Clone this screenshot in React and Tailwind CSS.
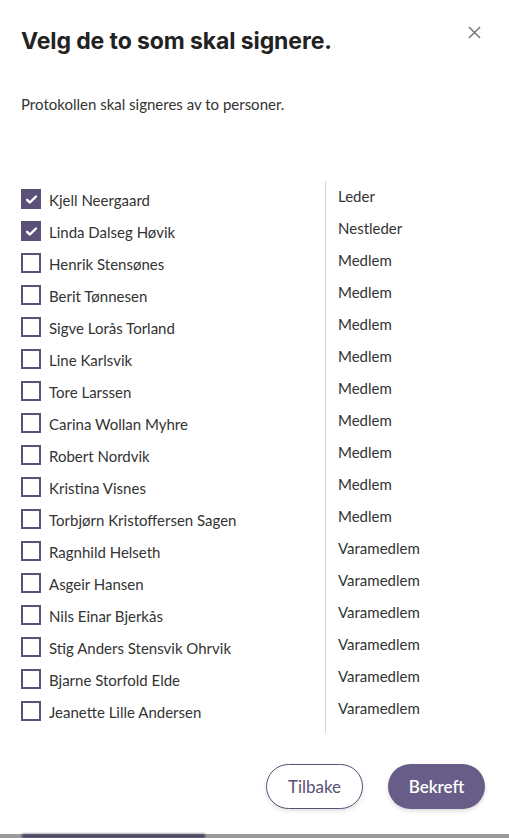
import React, { useState } from 'react';

const people = [
  { name: 'Kjell Neergaard', role: 'Leder', checked: true },
  { name: 'Linda Dalseg Høvik', role: 'Nestleder', checked: true },
  { name: 'Henrik Stensønes', role: 'Medlem' },
  { name: 'Berit Tønnesen', role: 'Medlem' },
  { name: 'Sigve Lorås Torland', role: 'Medlem' },
  { name: 'Line Karlsvik', role: 'Medlem' },
  { name: 'Tore Larssen', role: 'Medlem' },
  { name: 'Carina Wollan Myhre', role: 'Medlem' },
  { name: 'Robert Nordvik', role: 'Medlem' },
  { name: 'Kristina Visnes', role: 'Medlem' },
  { name: 'Torbjørn Kristoffersen Sagen', role: 'Medlem' },
  { name: 'Ragnhild Helseth', role: 'Varamedlem' },
  { name: 'Asgeir Hansen', role: 'Varamedlem' },
  { name: 'Nils Einar Bjerkås', role: 'Varamedlem' },
  { name: 'Stig Anders Stensvik Ohrvik', role: 'Varamedlem' },
  { name: 'Bjarne Storfold Elde', role: 'Varamedlem' },
  { name: 'Jeanette Lille Andersen', role: 'Varamedlem' },
];

function Checkbox({ checked, onChange }) {
  return (
    <button
      onClick={onChange}
      className={`w-5 h-5 shrink-0 flex items-center justify-center border-2 border-[#5a5078] ${checked ? 'bg-[#5a5078]' : 'bg-white'}`}
    >
      {checked && (
        <svg viewBox="0 0 16 16" className="w-[13px] h-[13px]" fill="none" stroke="white" strokeWidth="3" strokeLinecap="round" strokeLinejoin="round">
          <path d="M2.5 8.5l3.5 3.2 7.5-7.4" />
        </svg>
      )}
    </button>
  );
}

export default function App() {
  const [selected, setSelected] = useState(people.map((p) => !!p.checked));

  const toggle = (i) => setSelected((s) => s.map((v, j) => (j === i ? !v : v)));

  return (
    <div className="w-[509px] h-[838px] bg-white flex flex-col font-['Source_Sans_Pro','Lato','Liberation_Sans',sans-serif] text-[#333]">
      <div className="flex-1 flex flex-col px-[21px]">
        {/* Header */}
        <div className="flex items-start justify-between pt-[27px]">
          <h2 className="font-['Inter',sans-serif] font-bold text-[23px] leading-7 text-[#222] tracking-[-0.1px]">
            Velg de to som skal signere.
          </h2>
          <button className="mt-[-1px] mr-[7px]">
            <svg viewBox="0 0 14 14" className="w-[13px] h-[13px]" stroke="#6b6b6b" strokeWidth="1.4">
              <path d="M1 1l12 12M13 1L1 13" />
            </svg>
          </button>
        </div>

        <p className="mt-[39px] text-[15px] leading-5 text-[#333]">Protokollen skal signeres av to personer.</p>

        {/* List */}
        <div className="mt-[67px] flex">
          <div className="w-[304px] flex flex-col pt-[8px]">
            {people.map((p, i) => (
              <label key={p.name} className="h-8 flex items-start gap-2 cursor-pointer">
                <Checkbox checked={selected[i]} onChange={() => toggle(i)} />
                <span className="text-[15px] leading-5 mt-px text-[#333]">{p.name}</span>
              </label>
            ))}
          </div>
          <div className="border-l border-[#d4d4d4] pl-3 flex flex-col pt-[5px] pb-[2px]">
            {people.map((p) => (
              <div key={p.name} className="h-8 text-[15px] leading-5 text-[#333]">
                {p.role}
              </div>
            ))}
          </div>
        </div>

        {/* Footer */}
        <div className="mt-auto mb-[25px] flex justify-end gap-[25px] pr-[3px]">
          <button className="w-[97px] h-[45px] rounded-full border border-[#5a5078] text-[#5a5078] text-[17px] bg-white shadow-[0_2px_4px_rgba(0,0,0,0.12)]">
            Tilbake
          </button>
          <button className="w-[97px] h-[45px] rounded-full bg-[#675d88] text-white text-[17px] font-semibold shadow-[0_2px_4px_rgba(0,0,0,0.15)]">
            Bekreft
          </button>
        </div>
      </div>
      <div className="h-[4px] bg-[#9a9a9a] flex">
        <div className="ml-[22px] w-[183px] h-full bg-[#46405e] blur-[1px]" />
      </div>
    </div>
  );
}
